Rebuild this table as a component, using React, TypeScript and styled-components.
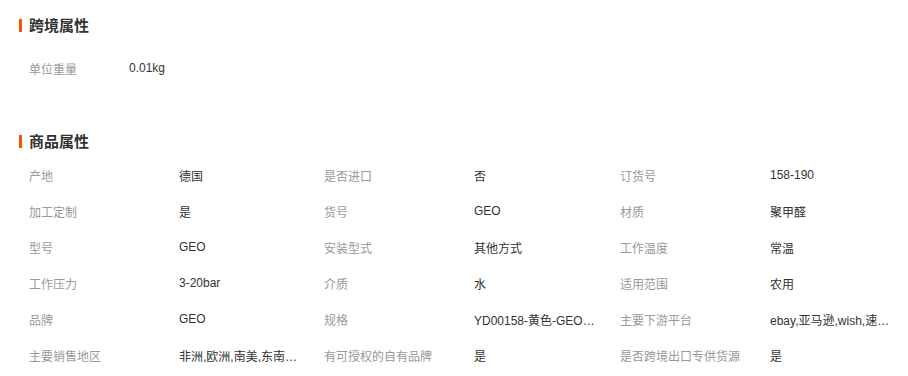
import React from 'react';
import styled, { createGlobalStyle } from 'styled-components';

type Attr = { label: string; value: string };

const crossAttrs: Attr[] = [{ label: '单位重量', value: '0.01kg' }];

const goodsAttrs: Attr[] = [
  { label: '产地', value: '德国' },
  { label: '是否进口', value: '否' },
  { label: '订货号', value: '158-190' },
  { label: '加工定制', value: '是' },
  { label: '货号', value: 'GEO' },
  { label: '材质', value: '聚甲醛' },
  { label: '型号', value: 'GEO' },
  { label: '安装型式', value: '其他方式' },
  { label: '工作温度', value: '常温' },
  { label: '工作压力', value: '3-20bar' },
  { label: '介质', value: '水' },
  { label: '适用范围', value: '农用' },
  { label: '品牌', value: 'GEO' },
  { label: '规格', value: 'YD00158-黄色-GEOline标准款' },
  { label: '主要下游平台', value: 'ebay,亚马逊,wish,速卖通,独立站' },
  { label: '主要销售地区', value: '非洲,欧洲,南美,东南亚,北美,东北亚,中东' },
  { label: '有可授权的自有品牌', value: '是' },
  { label: '是否跨境出口专供货源', value: '是' },
];

const GlobalStyle = createGlobalStyle`
  html, body {
    margin: 0;
    padding: 0;
    background: #fff;
  }
  body {
    font-family: Tahoma, "Liberation Sans", "Noto Sans CJK SC", sans-serif;
    font-size: 12px;
    color: #333;
  }
`;

const Page = styled.div`
  width: 908px;
  padding-top: 14px;
`;

const Section = styled.section<{ $gap?: number }>`
  margin-top: ${({ $gap }) => $gap || 0}px;
`;

const Title = styled.h3`
  display: flex;
  align-items: center;
  gap: 7px;
  margin: 0;
  padding-left: 19px;
  height: 20px;
  font-size: 15px;
  font-weight: bold;
  color: #333;
  font-family: "Noto Sans CJK SC", sans-serif;

  &::before {
    content: '';
    display: block;
    width: 3px;
    height: 13px;
    margin-top: 2px;
    background: #ff5000;
  }
`;

const Body = styled.div<{ $top: number }>`
  padding: ${({ $top }) => $top}px 0 0 29px;
`;

const SingleRow = styled.div`
  display: flex;
  height: 36px;
  align-items: center;
`;

const Grid = styled.div`
  display: grid;
  grid-template-columns: 295px 296px 1fr;
  grid-auto-rows: 36px;
`;

const Item = styled.div`
  display: flex;
  align-items: center;
  white-space: nowrap;
`;

const Label = styled.span<{ $width: number }>`
  width: ${({ $width }) => $width}px;
  flex: none;
  color: #999;
`;

const Value = styled.span`
  width: 122px;
  color: #333;
  overflow: hidden;
  text-overflow: ellipsis;
`;

export default function App() {
  return (
    <Page>
      <GlobalStyle />
      <Section>
        <Title>跨境属性</Title>
        <Body $top={16}>
          {crossAttrs.map((a) => (
            <SingleRow key={a.label}>
              <Label $width={100}>{a.label}</Label>
              <Value>{a.value}</Value>
            </SingleRow>
          ))}
        </Body>
      </Section>
      <Section $gap={44}>
        <Title>商品属性</Title>
        <Body $top={7}>
          <Grid>
            {goodsAttrs.map((a) => (
              <Item key={a.label}>
                <Label $width={150}>{a.label}</Label>
                <Value>{a.value}</Value>
              </Item>
            ))}
          </Grid>
        </Body>
      </Section>
    </Page>
  );
}
